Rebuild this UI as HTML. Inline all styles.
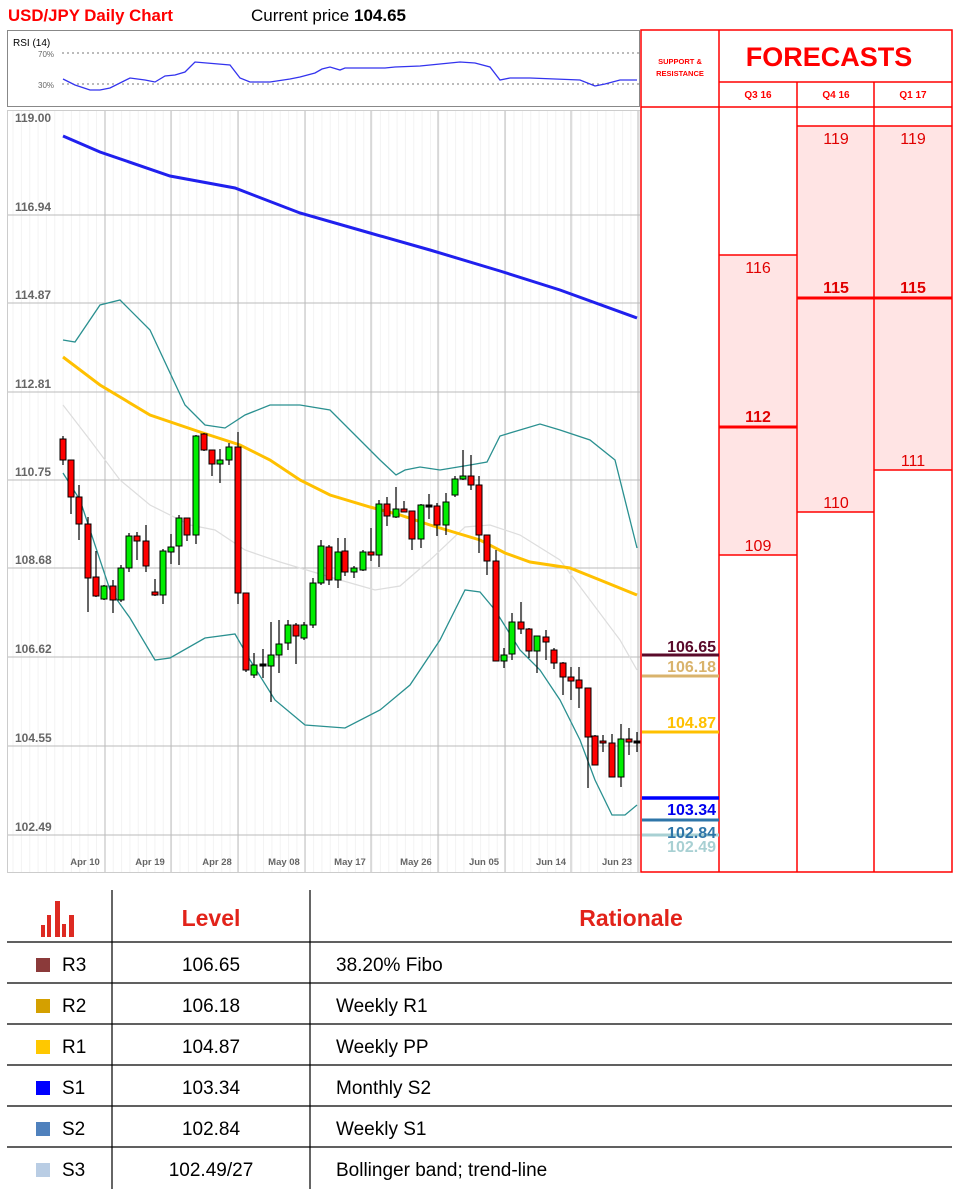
<!DOCTYPE html>
<html><head><meta charset="utf-8"><style>
body{margin:0;background:#fff;width:962px;height:1191px;overflow:hidden;position:relative;font-family:"Liberation Sans",sans-serif}
.a{position:absolute}
</style></head><body>
<svg class="a" style="left:0;top:0" width="962" height="1191" xmlns="http://www.w3.org/2000/svg" font-family="Liberation Sans, sans-serif">
<text x="8" y="21" font-size="17" font-weight="bold" fill="#ff0000" textLength="165" lengthAdjust="spacingAndGlyphs">USD/JPY Daily Chart</text>
<text x="251" y="21" font-size="17" fill="#000">Current price <tspan font-weight="bold">104.65</tspan></text>
<!-- RSI -->
<rect x="7.5" y="30.5" width="632" height="76" fill="#fff" stroke="#888"/>
<text x="13" y="46" font-size="10" fill="#000">RSI (14)</text>
<text x="38" y="57" font-size="8" fill="#666">70%</text>
<text x="38" y="88" font-size="8" fill="#666">30%</text>
<line x1="62" y1="53" x2="640" y2="53" stroke="#777" stroke-dasharray="2,3"/>
<line x1="62" y1="84" x2="640" y2="84" stroke="#777" stroke-dasharray="2,3"/>
<polyline fill="none" stroke="#3333ee" stroke-width="1.3" points="63,79 75,85 90,90 100,90 110,88 130,78 145,80 155,82 165,76 175,75 185,72 195,62 230,65 240,78 250,82 270,82 290,79 300,77 315,73 322,69 330,67 340,70 345,68 370,68 385,68 395,67 420,66 440,64 460,62 475,63 490,67 500,80 510,78 530,78 580,80 595,86 605,84 620,80 637,80"/>
<!-- main chart frame -->
<rect x="7.5" y="110.5" width="632" height="762" fill="#fff" stroke="#ccc"/>
<g id="grid"></g>
<g id="series"></g>
<g id="candles"></g>
<!-- right panel -->
<g fill="#ffe4e4">
<rect x="797" y="126" width="77" height="386"/>
<rect x="874" y="126" width="78" height="344"/>
<rect x="719" y="255" width="78" height="300"/>
</g>
<g stroke="#ff0000" stroke-width="1.5" fill="none">
<rect x="641" y="30" width="311" height="842"/>
<line x1="719" y1="30" x2="719" y2="872"/>
<line x1="797" y1="82" x2="797" y2="872"/>
<line x1="874" y1="82" x2="874" y2="872"/>
<line x1="719" y1="82" x2="952" y2="82"/>
<line x1="641" y1="107" x2="952" y2="107"/>
<line x1="797" y1="126" x2="952" y2="126"/>
<line x1="719" y1="255" x2="797" y2="255"/>
<line x1="719" y1="555" x2="797" y2="555"/>
<line x1="797" y1="512" x2="874" y2="512"/>
<line x1="874" y1="470" x2="952" y2="470"/>
</g>
<g stroke="#ff0000" stroke-width="3">
<line x1="719" y1="427" x2="797" y2="427"/>
<line x1="797" y1="298" x2="952" y2="298"/>
</g>
<g fill="#ff0000" text-anchor="middle">
<text x="680" y="64" font-size="7.5" font-weight="bold">SUPPORT &amp;</text>
<text x="680" y="76" font-size="7.5" font-weight="bold">RESISTANCE</text>
<text x="829" y="66" font-size="27" font-weight="bold">FORECASTS</text>
<text x="758" y="98" font-size="10" font-weight="bold">Q3 16</text>
<text x="836" y="98" font-size="10" font-weight="bold">Q4 16</text>
<text x="913" y="98" font-size="10" font-weight="bold">Q1 17</text>
<g font-size="16" fill="#e00000">
<text x="836" y="144">119</text><text x="913" y="144">119</text>
<text x="758" y="273">116</text>
<text x="836" y="293" font-weight="bold">115</text><text x="913" y="293" font-weight="bold">115</text>
<text x="758" y="422" font-weight="bold">112</text>
<text x="913" y="466">111</text>
<text x="836" y="508">110</text>
<text x="758" y="551">109</text>
</g>
</g>
<g stroke-width="3">
<line x1="642" y1="655" x2="719" y2="655" stroke="#5a0a2a"/>
<line x1="642" y1="676" x2="719" y2="676" stroke="#d9b36c"/>
<line x1="642" y1="732" x2="719" y2="732" stroke="#ffc000"/>
<line x1="642" y1="798" x2="719" y2="798" stroke="#0000ff" stroke-width="3.5"/>
<line x1="642" y1="820" x2="719" y2="820" stroke="#2e75a8"/>
<line x1="642" y1="835" x2="719" y2="835" stroke="#a8d0d3"/>
</g>
<g font-size="16" font-weight="bold" text-anchor="end">
<text x="716" y="652" fill="#5a0a2a">106.65</text>
<text x="716" y="672" fill="#d9b36c">106.18</text>
<text x="716" y="728" fill="#ffc000">104.87</text>
<text x="716" y="815" fill="#0000ee">103.34</text>
<text x="716" y="838" fill="#2e75a8">102.84</text>
<text x="716" y="852" fill="#a8d0d3">102.49</text>
</g>
<!-- table -->
<g stroke="#000" stroke-width="1.2">
<line x1="112" y1="890" x2="112" y2="1189"/>
<line x1="310" y1="890" x2="310" y2="1189"/>
<line x1="7" y1="942" x2="952" y2="942"/>
<line x1="7" y1="983" x2="952" y2="983"/>
<line x1="7" y1="1024" x2="952" y2="1024"/>
<line x1="7" y1="1065" x2="952" y2="1065"/>
<line x1="7" y1="1106" x2="952" y2="1106"/>
<line x1="7" y1="1147" x2="952" y2="1147"/>
</g>
<g fill="#dd2a22">
<rect x="41" y="925" width="4" height="12"/><rect x="47" y="915" width="4" height="22"/>
<rect x="55" y="901" width="5" height="36"/><rect x="62" y="924" width="4" height="13"/>
<rect x="69" y="915" width="5" height="22"/>
</g>
<text x="211" y="926" font-size="23" font-weight="bold" fill="#e2231a" text-anchor="middle">Level</text>
<text x="631" y="926" font-size="23" font-weight="bold" fill="#e2231a" text-anchor="middle">Rationale</text>
<g font-size="19" fill="#000">
<rect x="36" y="958" width="14" height="14" fill="#8b3a3a"/><text x="62" y="971">R3</text><text x="211" y="971" text-anchor="middle">106.65</text><text x="336" y="971">38.20% Fibo</text>
<rect x="36" y="999" width="14" height="14" fill="#d4a000"/><text x="62" y="1012">R2</text><text x="211" y="1012" text-anchor="middle">106.18</text><text x="336" y="1012">Weekly R1</text>
<rect x="36" y="1040" width="14" height="14" fill="#ffc800"/><text x="62" y="1053">R1</text><text x="211" y="1053" text-anchor="middle">104.87</text><text x="336" y="1053">Weekly PP</text>
<rect x="36" y="1081" width="14" height="14" fill="#0000ff"/><text x="62" y="1094">S1</text><text x="211" y="1094" text-anchor="middle">103.34</text><text x="336" y="1094">Monthly S2</text>
<rect x="36" y="1122" width="14" height="14" fill="#4f81bd"/><text x="62" y="1135">S2</text><text x="211" y="1135" text-anchor="middle">102.84</text><text x="336" y="1135">Weekly S1</text>
<rect x="36" y="1163" width="14" height="14" fill="#b9cde4"/><text x="62" y="1176">S3</text><text x="211" y="1176" text-anchor="middle">102.49/27</text><text x="336" y="1176">Bollinger band; trend-line</text>
</g>
</svg>
<script>
var NS="http://www.w3.org/2000/svg";
function el(p,t,a,txt){var e=document.createElementNS(NS,t);for(var k in a)e.setAttribute(k,a[k]);if(txt)e.textContent=txt;document.getElementById(p).appendChild(e);}
// grid
for(var x=13;x<640;x+=8.35)el("grid","line",{x1:x,y1:111,x2:x,y2:872,stroke:"#f3f3f3"});
var vx=[105,171,238,305,371,438,505,571,638];
vx.forEach(function(x){el("grid","line",{x1:x,y1:111,x2:x,y2:872,stroke:"#bbb"});});
var hy=[126,215,303,392,480,568,657,746,835],lb=["119.00","116.94","114.87","112.81","110.75","108.68","106.62","104.55","102.49"];
hy.forEach(function(y,i){if(i>0)el("grid","line",{x1:8,y1:y,x2:640,y2:y,stroke:"#bbb"});el("grid","text",{x:15,y:y-4,"font-size":12,"font-weight":"bold",fill:"#666"},lb[i]);});
var dl=["Apr 10","Apr 19","Apr 28","May 08","May 17","May 26","Jun 05","Jun 14","Jun 23"],dx=[85,150,217,284,350,416,484,551,617];
dl.forEach(function(t,i){el("grid","text",{x:dx[i],y:865,"font-size":9.5,"font-weight":"bold",fill:"#666","text-anchor":"middle"},t);});
// series
el("series","polyline",{fill:"none",stroke:"#ddd","stroke-width":1.2,points:"63,405 90,440 120,480 150,505 190,525 215,530 245,550 280,562 340,580 375,590 400,586 430,560 465,527 490,525 520,535 560,560 590,600 620,640 637,670"});
el("series","polyline",{fill:"none",stroke:"#2a9090","stroke-width":1.3,points:"63,340 75,342 100,305 120,300 150,330 185,405 205,425 225,428 245,415 270,405 300,405 330,410 360,440 380,460 396,475 405,470 420,467 440,470 470,465 487,462 500,436 540,424 560,430 590,440 615,460 637,548"});
el("series","polyline",{fill:"none",stroke:"#2a9090","stroke-width":1.3,points:"63,473 80,500 110,590 130,618 155,660 170,658 205,638 235,634 250,660 275,700 305,725 345,728 380,710 410,685 440,640 465,590 480,592 495,610 520,650 540,670 560,700 580,740 595,780 612,815 625,815 637,805"});
el("series","polyline",{fill:"none",stroke:"#ffc000","stroke-width":3,points:"63,357 100,385 150,415 200,432 240,445 270,460 300,480 330,495 370,507 400,515 430,525 480,540 505,553 530,562 570,568 600,580 637,595"});
el("series","polyline",{fill:"none",stroke:"#2020ee","stroke-width":3,points:"63,136 100,152 170,176 235,188 300,213 370,233 430,250 500,271 560,290 637,318"});
// candles: x, top, bottom, high, low, color(g/r/k)
var C=[[63,439,460,436,465,"r"],[71,460,497,460,514,"r"],[79,497,524,485,540,"r"],[88,524,578,517,612,"r"],[96,577,596,551,597,"r"],[104,586,599,585,600,"g"],[113,586,600,580,613,"r"],[121,568,600,565,602,"g"],[129,536,568,533,572,"g"],[137,536,541,532,560,"r"],[146,541,566,525,572,"r"],[155,592,595,579,596,"r"],[163,551,595,549,604,"g"],[171,547,552,534,564,"g"],[179,518,546,515,565,"g"],[187,518,535,518,541,"r"],[196,436,535,435,544,"g"],[204,434,450,433,451,"r"],[212,450,464,450,476,"r"],[220,460,464,449,483,"g"],[229,447,460,443,465,"g"],[238,447,593,432,604,"r"],
[246,593,670,593,672,"r"],[254,665,675,653,678,"g"],[263,664,666,649,678,"k"],[271,655,666,622,702,"g"],[279,644,655,620,673,"g"],[288,625,643,620,650,"g"],[296,625,636,623,664,"r"],[304,625,638,622,640,"g"],[313,583,625,578,628,"g"],[321,546,583,540,585,"g"],[329,547,580,545,585,"r"],[338,552,580,538,588,"g"],[345,551,572,538,576,"r"],[354,568,572,566,578,"g"],[363,552,570,550,571,"g"],[371,552,555,528,561,"r"],[379,504,555,500,567,"g"],[387,504,516,497,526,"r"],[396,509,517,487,518,"g"],[404,509,512,501,512,"r"],[412,511,539,511,550,"r"],[421,505,539,504,548,"g"],[429,505,507,494,519,"k"],[437,506,525,503,536,"r"],[446,502,525,493,535,"g"],[455,479,495,476,497,"g"],[463,476,479,450,480,"g"],[471,476,485,455,490,"r"],[479,485,535,476,553,"r"],[487,535,561,535,575,"r"],[496,561,661,550,661,"r"],[504,655,661,648,668,"g"],[512,622,654,613,660,"g"],[521,622,629,602,634,"r"],[529,629,651,628,658,"r"],[537,636,651,636,673,"g"],[546,637,642,630,660,"r"],[554,650,663,648,669,"r"],[563,663,677,662,695,"r"],[571,677,681,667,700,"r"],[579,680,688,667,708,"r"],[588,688,737,688,788,"r"],[595,736,765,735,765,"r"],[603,741,743,735,752,"r"],[612,743,777,734,777,"r"],[621,739,777,724,787,"g"],[629,739,742,728,755,"r"],[637,741,743,732,752,"k"]];
C.forEach(function(c){var x=c[0];el("candles","line",{x1:x,y1:c[3],x2:x,y2:c[4],stroke:"#000","stroke-width":1.2});
var f=c[5]=="g"?"#00ee00":c[5]=="r"?"#ff0000":"#000";var h=Math.max(c[2]-c[1],2);
el("candles","rect",{x:x-3,y:c[1],width:6,height:h,fill:f,stroke:"#000","stroke-width":1});});
</script>
</body></html>
